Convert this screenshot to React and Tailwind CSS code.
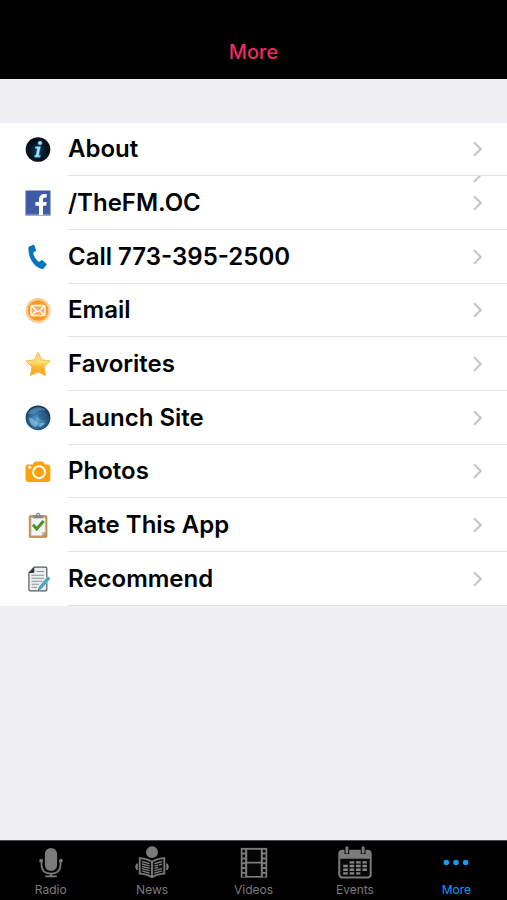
import React from "react";

function InfoIcon() {
  return (
    <svg viewBox="0 0 26 26" className="size-[26px]" aria-hidden="true">
      <defs>
        <radialGradient id="info" cx="50%" cy="55%" r="50%">
          <stop offset="0" stopColor="#123a5c" />
          <stop offset="0.6" stopColor="#06182b" />
          <stop offset="1" stopColor="#05080d" />
        </radialGradient>
      </defs>
      <circle cx="13" cy="12.5" r="12.3" fill="url(#info)" />
      <circle cx="13" cy="12.5" r="11.2" fill="none" stroke="#1c242d" strokeWidth="0.5" />
      <g fill="#a9e4ff" stroke="#2f86c0" strokeWidth="0.5">
        <circle cx="15" cy="6" r="2.1" />
        <path d="M10.400 9.600h5.300l-1.900 8.600h1.700l-.4 2H9.200l.4-2h1.200l1.400-6.600H10z" />
      </g>
    </svg>
  );
}

function FacebookIcon() {
  return (
    <svg viewBox="0 0 26 26" className="size-[26px]" aria-hidden="true">
      <rect x="0.5" y="0.5" width="25" height="25" fill="#3f5ba5" />
      <rect x="0.5" y="23.8" width="25" height="1.2" fill="#6f86c2" />
      <path
        d="M14 25v-9.200h-3.600v-3.800H14V9.600C14 5.900 16.300 4 19.500 4h2.200v3.600h-1.500c-1.700 0-2.200.8-2.200 2.200V12h3.700l-.5 3.800H18V25z"
        fill="#fff"
      />
    </svg>
  );
}

function PhoneIcon() {
  return (
    <svg viewBox="0 0 26 26" className="size-[26px]" aria-hidden="true">
      <path
        d="M4.3 2.4 8.3.8c.5-.2 1 .1 1.2.6l1.5 4.5c.2.5 0 1-.5 1.3L8.2 8.6c.5 3.6 2.8 7.3 5.8 9.3l2.4-1.6c.4-.3 1-.2 1.3.1l3.6 3.3c.4.4.4 1 .1 1.4l-2.8 3.4c-.4.5-1.1.7-1.7.5C10.200 23.600 3.500 15.800 3.300 4.200c0-.8.3-1.500 1-1.800z"
        fill="#0873bd"
      />
    </svg>
  );
}

function EmailIcon() {
  return (
    <svg viewBox="0 0 26 26" className="size-[26px]" aria-hidden="true">
      <circle cx="13" cy="12.5" r="12.4" fill="#fbc57c" />
      <circle cx="13" cy="12.5" r="10.8" fill="#f79a2c" stroke="#fde0b5" strokeWidth="0.9" />
      <rect x="6" y="7.500" width="14" height="10.200" rx="1.400" fill="#fbb45e" stroke="#fff" strokeWidth="1.300" />
      <path d="m6.800 8.300 5 4.600c.8.600 1.600.600 2.400 0l5-4.600M6.900 17l4-4M19.100 17l-4-4" fill="none" stroke="#fff" strokeWidth="1.200" />
    </svg>
  );
}

function StarIcon() {
  return (
    <svg viewBox="0 0 26 26" className="size-[26px]" aria-hidden="true">
      <defs>
        <linearGradient id="star" x1="0" y1="0" x2="0" y2="1">
          <stop offset="0" stopColor="#ffd873" />
          <stop offset="0.45" stopColor="#ffdc70" />
          <stop offset="0.6" stopColor="#fdbb35" />
          <stop offset="1" stopColor="#f7a21b" />
        </linearGradient>
      </defs>
      <path
        d="M13 1.200 16.600 8.800l8.600 1.100-6.200 6.100 1.700 8.600L13 21l-7.700 3.600L7 16 .8 9.900l8.600-1.100z"
        fill="url(#star)"
        stroke="#f0ae48"
        strokeWidth="0.800"
        strokeLinejoin="round"
      />
    </svg>
  );
}

function GlobeIcon() {
  return (
    <svg viewBox="0 0 26 26" className="size-[26px]" aria-hidden="true">
      <defs>
        <radialGradient id="globe" cx="48%" cy="58%" r="56%">
          <stop offset="0" stopColor="#5fa6d0" />
          <stop offset="0.55" stopColor="#2f6d9c" />
          <stop offset="1" stopColor="#12304f" />
        </radialGradient>
      </defs>
      <circle cx="13" cy="12.800" r="12.400" fill="url(#globe)" />
      <path d="M3 8.500C5 4.500 9 2 13.500 2.200c3.500 0 6 1.300 7.800 3.300-3 .3-5-.8-7.500.2-2.500.8-3 2.800-5.300 3-2 .3-3.500.8-5.500-.2z" fill="#7fb2d3" opacity="0.450" />
      <path d="M14 9c3-1 6.500 0 8 2.500.8 1.500.5 3-.5 3.500-2-.5-3 .5-5 0-2.500-.5-4-4.500-2.500-6z" fill="#1f4d75" opacity="0.500" />
      <path d="M4 13c2-.5 4 .5 5 2.500 1.500 1 3 .5 4 2s-.5 4-3 4.500C6.500 20.500 4 17 4 13zM14 18.500c2-1 4-1 6-.5-1 2-3 3.500-5 4-1-.8-1.500-2.500-1-3.500z" fill="#a9daf0" opacity="0.500" />
    </svg>
  );
}

function CameraIcon() {
  return (
    <svg viewBox="0 0 26 26" className="size-[26px]" aria-hidden="true">
      <path
        d="M3.300 5.500h4.200l1.300-2c.4-.700 1-1 1.800-1h6.200c.8 0 1.400.3 1.800 1l1.300 2h2.300c1.800 0 3.200 1.200 3.200 3V20c0 1.900-1.300 3.100-3.200 3.100H3.700C1.800 23.100.5 21.900.5 20V8.500c0-1.800 1-3 2.800-3z"
        fill="#ffa20d"
      />
      <circle cx="14" cy="13.200" r="6" fill="none" stroke="#fff" strokeWidth="1.900" />
      <circle cx="4.800" cy="8.200" r="1.500" fill="#fff" />
    </svg>
  );
}

function ClipboardIcon() {
  return (
    <svg viewBox="0 0 26 26" className="size-[26px]" aria-hidden="true">
      <rect x="4.200" y="3.500" width="17.800" height="22" rx="1.200" fill="#c4935b" stroke="#a97841" strokeWidth="0.600" />
      <path d="M6.200 5.800h14V20l-3.200 3.600H6.200z" fill="#f3f4f6" stroke="#d4d4d6" strokeWidth="0.500" />
      <path d="M20.200 20 17 23.600l-.3-3.300z" fill="#b9babd" />
      <path d="M8.200 3.400h2.600C11 1.700 11.700.8 13.100.8s2.100.9 2.300 2.600H18v2.900H8.200z" fill="#84888d" />
      <circle cx="13.100" cy="2.600" r="0.800" fill="#fff" />
      <path d="m8 12.800 3.700 4.200 6.900-8" fill="none" stroke="#43951e" strokeWidth="3" />
    </svg>
  );
}

function NoteIcon() {
  return (
    <svg viewBox="0 0 26 26" className="size-[26px]" aria-hidden="true">
      <path d="M9.200 1.200h11.300c.8 0 1.300.5 1.300 1.300v21c0 .8-.5 1.300-1.300 1.300H5.200c-.8 0-1.300-.5-1.300-1.300V6.800z" fill="#eceeef" stroke="#55595d" strokeWidth="1.200" />
      <path d="M3.900 6.900 9.300 1.300v4.200c0 .9-.5 1.400-1.400 1.400z" fill="#2e3236" />
      <path d="M11.500 5.500h7.500M6.500 9.300H19M6.500 12.300H19M6.500 15.300h11M6.500 18.300h7.500M6.500 21.300H12" stroke="#8f9497" strokeWidth="1.100" />
      <path d="m22.600 10.100 3 2.400-9.200 10.800-3.800 1.900.9-4.100z" fill="#4ba6c8" stroke="#fff" strokeWidth="0.400" />
      <path d="m12.600 25.100.5-2.100 1.400 1.200z" fill="#2d3438" />
    </svg>
  );
}

function Chevron() {
  return (
    <svg viewBox="0 0 10 16" className="h-4 w-[10px] shrink-0" aria-hidden="true">
      <path d="m1 1.200 6.800 6.800L1 14.800" fill="none" stroke="#c4c4c7" strokeWidth="2" />
    </svg>
  );
}

function MicIcon() {
  return (
    <svg viewBox="0 0 36 36" className="size-9" fill="#7b7b7b" aria-hidden="true">
      <rect x="11.500" y="2" width="13" height="24.500" rx="6.500" />
      <path d="M8 14.500v6c0 5.500 4 8.800 10 8.800s10-3.300 10-8.800v-6" fill="none" stroke="#7b7b7b" strokeWidth="1.900" />
      <circle cx="7.500" cy="15.500" r="2" />
      <circle cx="28.500" cy="15.500" r="2" />
      <path d="M16.800 29h2.400v2.300h4.900v1.900H11.900v-1.900h4.900z" />
    </svg>
  );
}

function NewsIcon() {
  return (
    <svg viewBox="0 0 36 36" className="size-9" fill="#7b7b7b" aria-hidden="true">
      <circle cx="18" cy="6.500" r="6.300" />
      <path d="M4 11.800c5.500.2 10 1.400 14 3.700 4-2.300 8.500-3.500 14-3.700v18.400c-5.500.2-10 1.500-14 4-4-2.500-8.500-3.800-14-4z" />
      <path d="M5.900 13.800c4.100.4 7.800 1.400 11.100 3.200v14.500c-3.400-1.700-7-2.700-11.100-3.100zM30.100 13.800c-4.100.4-7.800 1.400-11.100 3.200v14.500c3.400-1.700 7-2.700 11.100-3.100z" fill="#0d0d0d" />
      <path d="m7.500 16.500 8 2.200M7.500 19l8 2.200M7.500 21.500l8 2.200M7.500 24l8 2.200M7.500 26.500l8 2.200M20.500 18.700l8-2.200M20.500 21.200l4-1M25.500 20l3-.8M20.500 23.700l4-1M20.500 26.200l8-2.200M20.500 28.700l8-2.200" stroke="#858585" strokeWidth="1.300" />
      <path d="M3 18.300v7.200c-1.500 0-2.700-1.600-2.700-3.600s1.200-3.600 2.700-3.600zM33 18.300v7.200c1.500 0 2.700-1.600 2.700-3.600s-1.200-3.600-2.700-3.600z" />
    </svg>
  );
}

function FilmIcon() {
  return (
    <svg viewBox="0 0 36 36" className="size-9" aria-hidden="true">
      <rect x="4" y="2" width="28" height="31.500" fill="#7b7b7b" />
      <path d="M10.800 4h14.400v12.800H10.800zM10.800 18.400h14.400v13.400H10.800z" fill="#050505" />
      <path d="M7.200 4v28.500M28.800 4v28.500" stroke="#050505" strokeWidth="2.800" strokeDasharray="3 2.100" />
    </svg>
  );
}

function CalendarIcon() {
  return (
    <svg viewBox="0 0 36 36" className="size-9" aria-hidden="true">
      <path d="M4.500 4h27c2.600 0 4.200 1.600 4.200 4.200V30c0 2.800-1.600 4.400-4.400 4.400H4.700C1.900 34.400.3 32.800.3 30V8.200C.3 5.600 1.900 4 4.500 4z" fill="#7b7b7b" />
      <path d="M2.400 13.400h31.200V30c0 1.500-.8 2.300-2.300 2.300H4.700c-1.500 0-2.300-.8-2.300-2.300z" fill="#080808" />
      <path d="M6.900 1.500h5v7h-5zM24.100 1.500h5v7h-5z" fill="#000" />
      <path d="M9.400 1.700v5M26.600 1.700v5" stroke="#7b7b7b" strokeWidth="3" strokeLinecap="round" />
      <path d="M12.300 17.300h18.300M5.500 21.200h25.100M5.500 25.100h25.100M5.500 29h18.100" stroke="#858585" strokeWidth="2.500" strokeDasharray="4.900 1.900" />
    </svg>
  );
}

function DotsIcon() {
  return (
    <svg viewBox="0 0 36 36" className="size-9" fill="#159bf0" aria-hidden="true">
      <circle cx="7.800" cy="17.500" r="2.900" />
      <circle cx="18" cy="17.500" r="2.900" />
      <circle cx="28.200" cy="17.500" r="2.900" />
    </svg>
  );
}

const items = [
  { label: "About", Icon: InfoIcon },
  { label: "/TheFM.OC", Icon: FacebookIcon, ghost: true },
  { label: "Call 773-395-2500", Icon: PhoneIcon },
  { label: "Email", Icon: EmailIcon },
  { label: "Favorites", Icon: StarIcon },
  { label: "Launch Site", Icon: GlobeIcon },
  { label: "Photos", Icon: CameraIcon },
  { label: "Rate This App", Icon: ClipboardIcon },
  { label: "Recommend", Icon: NoteIcon },
];

const tabs = [
  { label: "Radio", Icon: MicIcon },
  { label: "News", Icon: NewsIcon },
  { label: "Videos", Icon: FilmIcon },
  { label: "Events", Icon: CalendarIcon },
  { label: "More", Icon: DotsIcon, active: true },
];

export default function App() {
  return (
    <div className="flex min-h-screen flex-col bg-[#efeff4] font-['Inter','Liberation_Sans',sans-serif]">
      <header className="flex h-[79px] items-end justify-center bg-black pb-3">
        <h1 className="text-[20px] leading-[30px] font-medium text-[#e62e63]">More</h1>
      </header>

      <main className="flex-1 pt-11">
        <ul className="bg-white">
          {items.map(({ label, Icon, ghost }) => (
            <li key={label} className="h-[54px] nth-[3n+1]:h-[53px]">
              <a href="#" className="relative flex h-full items-center gap-[17px] pl-[25px]">
                <Icon />
                <span className="flex h-full flex-1 items-center justify-between border-b border-[#e4e4e6] pr-6 text-[24px] leading-7 font-semibold text-black">
                  {label}
                  <Chevron />
                </span>
                {ghost && (
                  <span className="absolute top-0 right-6 flex h-[7px] items-end overflow-hidden">
                    <Chevron />
                  </span>
                )}
              </a>
            </li>
          ))}
        </ul>
      </main>

      <nav className="flex h-[60px] border-t border-[#4a4a4a] bg-black">
        {tabs.map(({ label, Icon, active }) => (
          <a
            key={label}
            href="#"
            aria-current={active ? "page" : undefined}
            className={`flex flex-1 flex-col items-center pt-[5px] text-[12px] leading-5 ${active ? "text-[#159bf0]" : "text-[#7b7b7b]"}`}
          >
            <Icon />
            {label}
          </a>
        ))}
      </nav>
    </div>
  );
}
